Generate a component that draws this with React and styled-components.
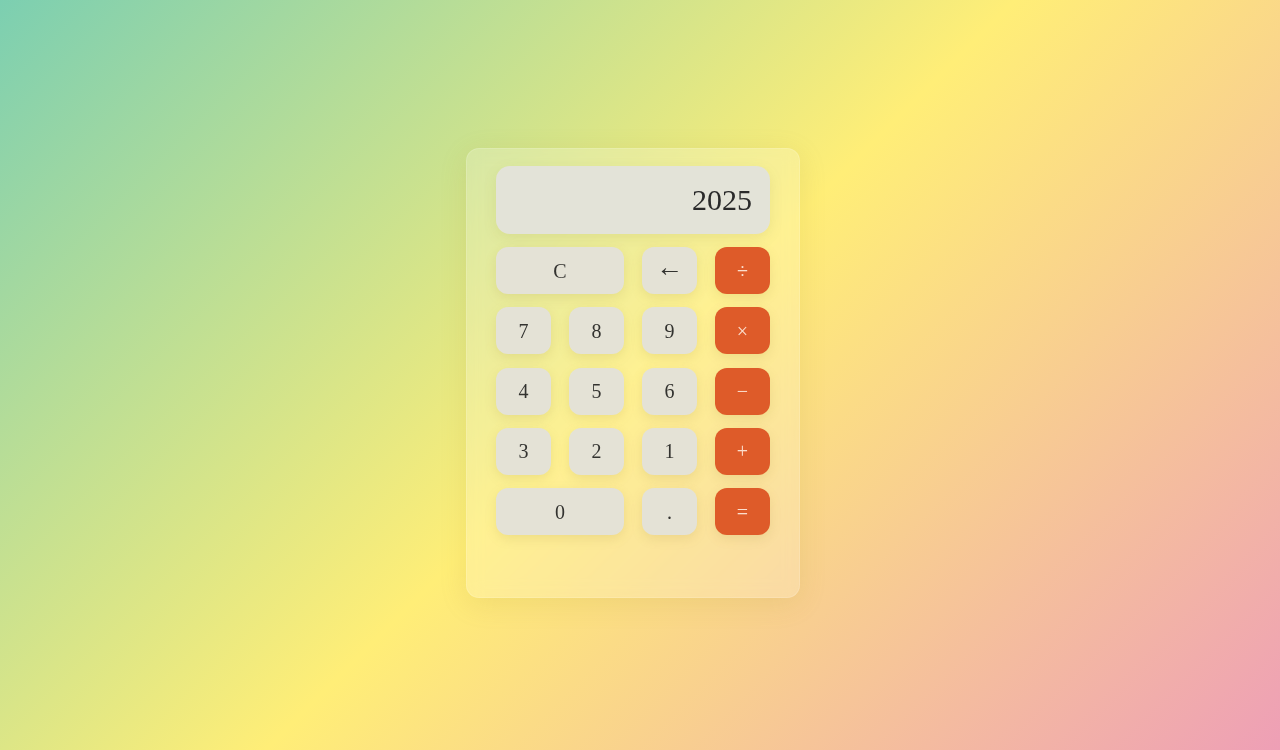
import React from "react";
import styled, { createGlobalStyle } from "styled-components";

const Global = createGlobalStyle`
  html, body { margin: 0; padding: 0; }
  body {
    width: 1280px;
    height: 750px;
    overflow: hidden;
    font-family: "Liberation Serif", "Times New Roman", serif;
  }
`;

const Page = styled.div`
  width: 1280px;
  height: 750px;
  background: linear-gradient(135deg, #7ccfb1 0%, #ffee77 50%, #ee9fb6 100%);
  display: flex;
  align-items: flex-start;
  justify-content: center;
  padding: 148px 14px 0 0;
  box-sizing: border-box;
`;

const Card = styled.div`
  width: 334px;
  height: 450px;
  box-sizing: border-box;
  padding: 17px 29px;
  border-radius: 13px;
  background: rgba(255, 255, 255, 0.2);
  border: 1px solid rgba(255, 255, 255, 0.14);
  box-shadow: 0 6px 28px rgba(160, 140, 40, 0.14);
  backdrop-filter: blur(8px);
  display: flex;
  flex-direction: column;
  gap: 13px;
`;

const Display = styled.div`
  height: 68px;
  border-radius: 14px;
  background: #e3e3d8;
  box-shadow: 0 4px 14px rgba(120, 120, 40, 0.12);
  display: flex;
  align-items: center;
  justify-content: flex-end;
  padding: 0 18px;
  font-size: 30px;
  color: #2a2a2a;
`;

const Grid = styled.div`
  display: grid;
  grid-template-columns: repeat(4, 55px);
  grid-auto-rows: 47px;
  column-gap: 18px;
  row-gap: 13.3px;
`;

const Key = styled.button`
  grid-column: span ${(p) => p.$span || 1};
  border: none;
  border-radius: 12px;
  font-family: "Liberation Serif", "Times New Roman", serif;
  font-size: ${(p) => (p.$big ? "27px" : "20px")};
  line-height: 1;
  padding: 0 0 ${(p) => (p.$big ? "6px" : "0")};
  cursor: pointer;
  background: ${(p) => (p.$op ? "#de5b29" : "#e4e2d6")};
  color: ${(p) => (p.$op ? "rgba(255, 240, 228, 0.88)" : "#333330")};
  box-shadow: 0 4px 12px rgba(140, 120, 40, 0.14);
  display: flex;
  align-items: center;
  justify-content: center;
`;

const keys = [
  { l: "C", span: 2 },
  { l: "←", big: true },
  { l: "÷", op: true },
  { l: "7" },
  { l: "8" },
  { l: "9" },
  { l: "×", op: true },
  { l: "4" },
  { l: "5" },
  { l: "6" },
  { l: "−", op: true },
  { l: "3" },
  { l: "2" },
  { l: "1" },
  { l: "+", op: true },
  { l: "0", span: 2 },
  { l: "." },
  { l: "=", op: true },
];

export default function App() {
  return (
    <>
      <Global />
      <Page>
        <Card>
          <Display>2025</Display>
          <Grid>
            {keys.map((k, i) => (
              <Key key={i} $span={k.span} $op={k.op} $big={k.big}>
                {k.l}
              </Key>
            ))}
          </Grid>
        </Card>
      </Page>
    </>
  );
}
